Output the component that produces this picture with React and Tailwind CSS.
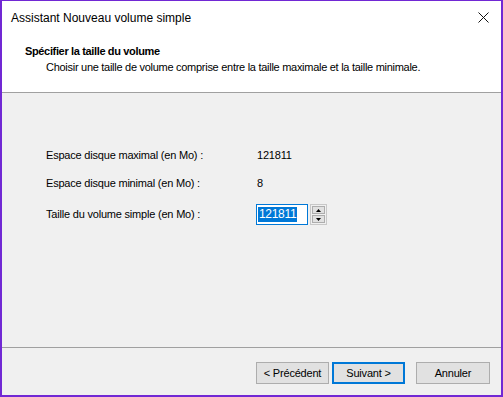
import React from "react";

export default function App() {
  const font = { fontFamily: '"Liberation Sans", Arial, sans-serif' };
  return (
    <div className="w-[503px] h-[397px] bg-[#7128d4] pt-px px-[2px] pb-[2px]" style={font}>
      <div className="w-full h-full flex flex-col bg-[#f0f0f0] text-[11px] tracking-[-0.2px] text-black">
        {/* title bar + header */}
        <div className="bg-white h-[91px] flex flex-col">
          <div className="h-[34px] flex items-center justify-between pl-[9px] pr-[12px]">
            <span className="text-[12px] tracking-normal leading-none">Assistant Nouveau volume simple</span>
            <svg width="11" height="11" viewBox="0 0 11 11" className="mt-[-2px]">
              <path d="M0.5 0.5 L10.5 10.5 M10.5 0.5 L0.5 10.5" stroke="#111" strokeWidth="1" />
            </svg>
          </div>
          <div className="pl-[23px] pt-[9px] font-bold tracking-[-0.35px] leading-[14px]">Spécifier la taille du volume</div>
          <div className="pl-[44px] pt-[2px] tracking-[-0.28px] leading-[14px]">
            Choisir une taille de volume comprise entre la taille maximale et la taille minimale.
          </div>
        </div>
        <div className="h-px bg-[#a0a0a0]" />
        {/* body */}
        <div className="flex-1 flex flex-col pl-[44px] pt-[55px]">
          <div className="flex items-center h-[14px]">
            <span className="w-[211px]">Espace disque maximal (en Mo) :</span>
            <span>121811</span>
          </div>
          <div className="flex items-center h-[14px] mt-[14px]">
            <span className="w-[211px]">Espace disque minimal (en Mo) :</span>
            <span>8</span>
          </div>
          <div className="flex items-center mt-[14px]">
            <span className="w-[210px]">Taille du volume simple (en Mo) :</span>
            <div className="flex items-center gap-[2px]">
              <div className="w-[52px] h-[21px] border border-[#0078d7] bg-white flex items-center pl-px">
                <span className="bg-[#0078d7] text-white text-[12px] tracking-[-0.3px] leading-[15px] px-px">121811</span>
              </div>
              <div className="flex flex-col gap-px w-[17px] h-[21px] border border-[#c8c8c8] p-px bg-[#f0f0f0]">
                <div className="flex-1 bg-[#e1e1e1] border border-[#adadad] flex items-center justify-center">
                  <svg width="5" height="3" viewBox="0 0 5 3"><path d="M2.5 0 L5 3 L0 3 Z" fill="#000" /></svg>
                </div>
                <div className="flex-1 bg-[#e1e1e1] border border-[#adadad] flex items-center justify-center">
                  <svg width="5" height="3" viewBox="0 0 5 3"><path d="M0 0 L5 0 L2.5 3 Z" fill="#000" /></svg>
                </div>
              </div>
            </div>
          </div>
        </div>
        <div className="h-px bg-[#a0a0a0]" />
        <div className="h-[47px] flex items-start pt-[14px] pl-[254px]">
          <button className="w-[73px] h-[22px] border border-[#adadad] bg-[#e1e1e1] text-[11px] leading-none">
            &lt; Précédent
          </button>
          <button className="ml-[3px] w-[73px] h-[22px] border-2 border-[#0078d7] bg-[#e1e1e1] text-[11px] leading-none">
            Suivant &gt;
          </button>
          <button className="ml-[11px] w-[74px] h-[22px] border border-[#adadad] bg-[#e1e1e1] text-[11px] leading-none">
            Annuler
          </button>
        </div>
      </div>
    </div>
  );
}
